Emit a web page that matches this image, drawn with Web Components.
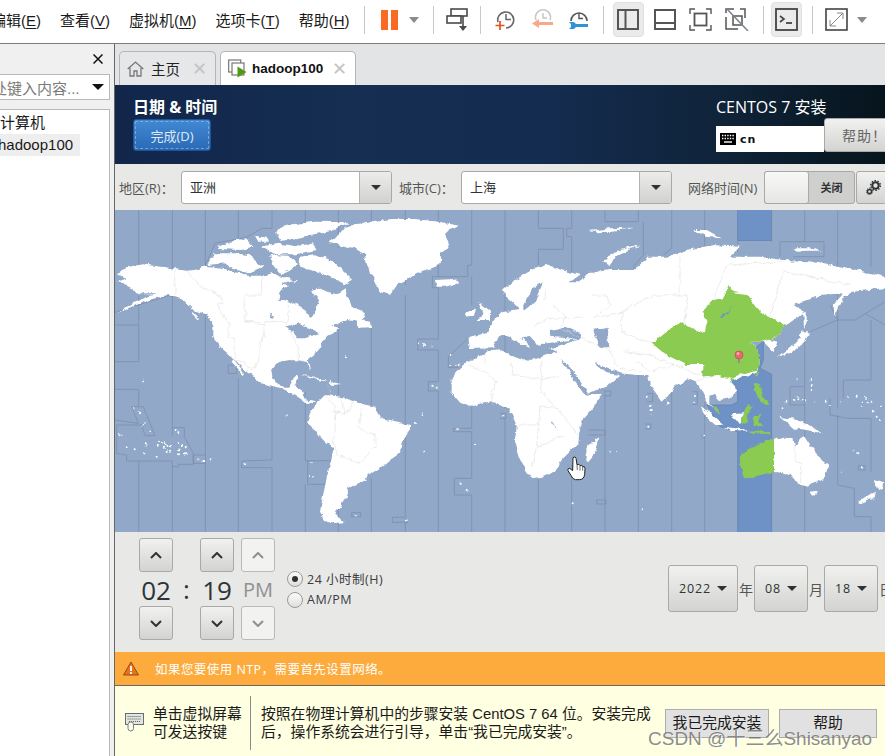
<!DOCTYPE html>
<html>
<head>
<meta charset="utf-8">
<style>
html,body{margin:0;padding:0;width:885px;height:756px;overflow:hidden;background:#fff;}
</style>
</head>
<body>
<vm-app></vm-app>
<script>
const CJK = '"Liberation Sans","Noto Sans CJK SC",sans-serif';
const ANA = '"Open Sans","Noto Sans CJK SC",sans-serif';

// small helper, every element gets its own open shadow root from a template
function def(tag, css, html){
    const template = document.createElement('template');
    template.innerHTML = `<style>*{box-sizing:border-box;}${css}</style>${html}`;
    customElements.define(tag, class extends HTMLElement {
        constructor(){
            super();
            this.attachShadow({mode:'open'}).appendChild(template.content.cloneNode(true));
        }
    });
}

/* ---------- toolbar ---------- */
def('tb-sep', `:host{display:block;width:1px;height:28px;background:#c9c9c9;flex:none;}`, ``);
def('tb-toggle', `:host{display:flex;align-items:center;justify-content:center;height:35px;background:#ebebeb;border:1px solid #e0e0e0;border-radius:4px;flex:none;}`, `<slot></slot>`);

def('vm-menubar', `
:host{display:flex;align-items:center;height:44px;padding-bottom:4px;border-bottom:1px solid #7c7c7c;background:#fff;font:15px ${CJK};color:#1a1a1a;flex:none;overflow:hidden;white-space:nowrap;}
span{flex:none;margin-right:19px;}
u{text-underline-offset:2px;}
svg{flex:none;display:block;}
`, `
<span style="margin-left:-9px">编辑(<u>E</u>)</span>
<span>查看(<u>V</u>)</span>
<span>虚拟机(<u>M</u>)</span>
<span>选项卡(<u>T</u>)</span>
<span style="margin-right:14px">帮助(<u>H</u>)</span>
<tb-sep></tb-sep>
<svg style="margin-left:16px" width="17" height="20" viewBox="0 0 17 20"><rect x="0" width="7" height="20" fill="#fb6a22"/><rect x="10" width="7" height="20" fill="#fb6a22"/></svg>
<svg style="margin-left:11px;margin-right:14px" width="10" height="6" viewBox="0 0 10 6"><path d="M0 0H10L5 6Z" fill="#8a8a8a"/></svg>
<tb-sep></tb-sep>
<svg style="margin-left:12px" width="23" height="24" viewBox="0 0 23 24" fill="none" stroke="#4a4a4a" stroke-width="1.6"><rect x="5" y="1" width="16" height="7"/><rect x="1" y="8" width="14" height="7" fill="#fff"/><path d="M17 8V20"/><path d="M13 18H21L17 23Z" fill="#4a4a4a" stroke="none"/></svg>
<tb-sep style="margin-left:11px"></tb-sep>
<svg style="margin-left:14px" width="21" height="22" viewBox="0 0 21 22" fill="none"><path d="M3 13A8 8 0 1 1 11 19" stroke="#666" stroke-width="1.6"/><path d="M11 5V10.500H16" stroke="#666" stroke-width="1.5"/><path d="M5 12V21M0.500 16.500H9.500" stroke="#e8501a" stroke-width="1.7"/></svg>
<svg style="margin-left:16px" width="21" height="22" viewBox="0 0 21 22" fill="none"><path d="M4 11A7.500 7.500 0 1 1 18 11" stroke="#c9c9c9" stroke-width="1.6"/><path d="M11 4V9H15" stroke="#c4c4c4" stroke-width="1.4"/><path d="M0 14.500L7 10V13H21V16H7V19Z" fill="#f9a98a"/></svg>
<svg style="margin-left:15px" width="21" height="22" viewBox="0 0 21 22" fill="none"><path d="M3 12A8 8 0 1 1 19 12" stroke="#555" stroke-width="1.6"/><path d="M11 4V9.500H15" stroke="#555" stroke-width="1.4"/><path d="M1 13H6L8 15H20V18H8L6 20H1L3 18V15Z" fill="#2f93d6"/></svg>
<tb-sep style="margin-left:14px"></tb-sep>
<tb-toggle style="margin-left:9px;width:31px"><svg width="22" height="21" viewBox="0 0 22 21" fill="none" stroke="#555" stroke-width="2"><rect x="1" y="1" width="20" height="19"/><path d="M8.500 1V20"/></svg></tb-toggle>
<svg style="margin-left:10px" width="22" height="21" viewBox="0 0 22 21" fill="none" stroke="#555" stroke-width="2"><rect x="1" y="1" width="20" height="19"/><path d="M1 14H21"/></svg>
<svg style="margin-left:13px" width="23" height="23" viewBox="0 0 23 23" fill="none" stroke="#555" stroke-width="1.400"><rect x="5.500" y="5.500" width="12" height="12" stroke-width="1.800"/><path d="M1 6V1H6M17 1H22V6M22 17V22H17M6 22H1V17"/></svg>
<svg style="margin-left:13px" width="24" height="23" viewBox="0 0 24 23" fill="none" stroke="#555" stroke-width="1.500"><path d="M1 5V1H9M15 1H20V10M1 9V21H13" /><rect x="8" y="8" width="9" height="9"/><path d="M1 0L23 23" stroke="#7a8290"/></svg>
<tb-sep style="margin-left:14px"></tb-sep>
<tb-toggle style="margin-left:7px;width:31px"><svg width="23" height="23" viewBox="0 0 23 23" fill="none" stroke="#444" stroke-width="1.800"><rect x="1" y="1" width="21" height="21"/><path d="M5 8L9 11L5 14" stroke-width="1.600"/><path d="M11 15H17"/></svg></tb-toggle>
<tb-sep style="margin-left:10px"></tb-sep>
<svg style="margin-left:12px" width="23" height="23" viewBox="0 0 23 23" fill="none" stroke="#444" stroke-width="1.600"><rect x="1" y="1" width="21" height="21"/><path d="M5 18L18 5" stroke="#8a8a8a" stroke-width="1"/><path d="M12 5H18V11M5 12V18H11" stroke="#8a8a8a" stroke-width="1"/></svg>
<svg style="margin-left:9px" width="10" height="6" viewBox="0 0 10 6"><path d="M0 0H10L5 6Z" fill="#8a8a8a"/></svg>
`);

/* ---------- left library panel ---------- */
def('vm-sidebar', `
:host{display:flex;flex-direction:column;width:114px;background:#f0f0f0;flex:none;padding-right:4px;font:15px ${CJK};color:#1a1a1a;overflow:hidden;white-space:nowrap;}
.head{height:30px;display:flex;align-items:center;justify-content:flex-end;padding-right:7px;line-height:1;flex:none;}
.search{height:26px;background:#fff;border:1px solid #b9b9b9;border-left:0;display:flex;align-items:center;color:#7a7a7a;flex:none;}
.search span{margin-left:-8px;flex:none;}
.search svg{margin-left:auto;margin-right:5px;}
.tree{flex:1;margin-top:9px;background:#fff;border:1px solid #b9b9b9;border-left:0;border-bottom:0;padding-top:2px;}
.tree div{height:22px;line-height:22px;}
.sel{width:80px;background:#eeeeee;}
.sel span{margin-left:-2px;display:block;}
`, `
<div class="head"><svg width="10" height="10" viewBox="0 0 10 10"><path d="M0.500 0.500L9.500 9.500M9.500 0.500L0.500 9.500" stroke="#111" stroke-width="1.500"/></svg></div>
<div class="search"><span>处键入内容...</span><svg width="12" height="6" viewBox="0 0 12 6"><path d="M0 0H12L6 6Z" fill="#111"/></svg></div>
<div class="tree"><div>计算机</div><div class="sel"><span>hadoop100</span></div></div>
`);

/* ---------- tabs ---------- */
def('vm-tabs', `
:host{display:flex;align-items:flex-end;height:41px;background:#e3e4e6;padding-left:4px;flex:none;font:14.5px ${CJK};color:#222;white-space:nowrap;}
.tab{height:34px;display:flex;align-items:center;border:1px solid #b5b5b5;border-bottom:0;border-radius:5px 5px 0 0;}
.home{width:97px;padding-left:7px;background:#e6e7e9;}
.vm{width:136px;padding-left:7px;background:#fff;margin-left:4px;font-weight:bold;font-size:13.5px;color:#111;}
.vm svg{margin-right:5px;}
.x{margin-left:auto;margin-right:8px;font:18px "Liberation Sans",sans-serif;color:#c4c4c4;}
svg{flex:none;margin-right:7px;}
`, `
<div class="tab home"><svg width="17" height="16" viewBox="0 0 17 16" fill="none" stroke="#777" stroke-width="1.300"><path d="M0.700 8L8.500 1L16.300 8"/><path d="M3 6.500V15H7V10H10V15H14V6.500"/></svg><span>主页</span><span class="x">✕</span></div>
<div class="tab vm"><svg width="19" height="19" viewBox="0 0 19 19" fill="none"><rect x="0.700" y="1" width="12" height="12" stroke="#777" stroke-width="1.200"/><rect x="4" y="4" width="12" height="12" stroke="#777" stroke-width="1.200" fill="#fff"/><path d="M9.500 7.500L18.500 13L9.500 18.500Z" fill="#4f9a12"/></svg><span>hadoop100</span><span class="x">✕</span></div>
`);

/* ---------- anaconda widgets ---------- */
def('ana-button', `
:host{display:flex;align-items:center;justify-content:center;flex:none;background:linear-gradient(#f1f1f0,#d3d3d1);border:1px solid #a9a9a7;border-radius:3px;color:#2e3436;font:12px ${ANA};}
`, `<slot></slot>`);

def('ana-combo', `
:host{display:flex;width:211px;height:33px;background:#fff;border:1px solid #a9a9a7;border-radius:3px;flex:none;font:13px ${ANA};color:#2e3436;}
.v{flex:1;padding-left:8px;line-height:31px;}
.a{width:32px;background:linear-gradient(#ececea,#d1d1cf);border-left:1px solid #b3b3b1;display:flex;align-items:center;justify-content:center;border-radius:0 2px 2px 0;}
`, `<div class="v"><slot></slot></div><div class="a"><svg width="10" height="5" viewBox="0 0 10 5"><path d="M0 0H10L5 5Z" fill="#2e3436"/></svg></div>`);

def('spoke-header', `
:host{display:flex;height:79px;flex:none;background:linear-gradient(90deg,#11264a 0%,#152e52 30%,#142c50 55%,#0f2338 80%,#06141c 100%);color:#fff;font:15px ${ANA};white-space:nowrap;overflow:hidden;}
.left{width:601px;padding:12px 0 0 18px;flex:none;}
.title{font-weight:bold;line-height:20px;font-size:16px;}
.done{display:flex;align-items:center;justify-content:center;margin-top:2px;width:78px;height:32px;color:#dfe9f6;font-size:13px;background:linear-gradient(#4289d2,#2a69b6);border:1px solid #1f5596;border-radius:3px;outline:1px dashed rgba(170,205,240,.55);outline-offset:-3px;}
.right{width:175px;padding-top:12px;flex:none;}
.inst{line-height:20px;font-size:16px;}
.row{display:flex;align-items:flex-end;margin-top:1px;}
.kb{width:108px;height:26px;background:#fff;display:flex;align-items:center;padding-left:4px;color:#111;font:bold 11px "DejaVu Sans",sans-serif;letter-spacing:1px;}
.kb svg{margin-right:4px;}
ana-button{width:66px;height:34px;font-size:14px;color:#666;letter-spacing:1px;justify-content:flex-start;padding-left:17px;}
`, `
<div class="left"><div class="title">日期 &amp; 时间</div><div class="done">完成(D)</div></div>
<div class="right"><div class="inst">CENTOS 7 安装</div>
<div class="row"><div class="kb"><svg width="16" height="12" viewBox="0 0 16 12"><rect width="16" height="12" fill="#000"/><path d="M2 2.500H14M2 5.500H14" stroke="#fff" stroke-width="1.400" stroke-dasharray="1.400 1.200"/><path d="M4 9H12" stroke="#fff" stroke-width="1.400"/></svg>cn</div><ana-button>帮助！</ana-button></div></div>
`);

def('tz-bar', `
:host{display:flex;align-items:center;height:46px;background:#e8e8e7;padding-left:4px;flex:none;font:13px ${ANA};color:#555753;white-space:nowrap;overflow:hidden;}
.l{width:62px;flex:none;}
.toggle{display:flex;width:91px;height:33px;flex:none;background:#cfcfcd;border:1px solid #a9a9a7;border-radius:3px;font-size:11px;font-weight:bold;color:#2e3436;}
.knob{width:45px;background:linear-gradient(#f8f8f7,#e6e6e4);border-radius:3px;margin:-1px 0 -1px -1px;border:1px solid #a9a9a7;}
.off{flex:1;text-align:center;line-height:31px;}
ana-button{width:34px;height:33px;margin-left:1px;}
`, `
<div class="l">地区(R)：</div><ana-combo>亚洲</ana-combo>
<div class="l" style="margin-left:7px">城市(C)：</div><ana-combo>上海</ana-combo>
<div class="l" style="margin-left:16px;width:76px">网络时间(N)</div>
<div class="toggle"><div class="knob"></div><div class="off">关闭</div></div>
<ana-button><svg width="15" height="15" viewBox="0 0 15 15"><circle cx="9.500" cy="5.500" r="3.200" fill="none" stroke="#2e3436" stroke-width="2"/><circle cx="9.500" cy="5.500" r="4.800" fill="none" stroke="#2e3436" stroke-width="1.500" stroke-dasharray="1.500 1.500"/><circle cx="3.500" cy="11.500" r="2" fill="none" stroke="#2e3436" stroke-width="1.400"/><circle cx="3.500" cy="11.500" r="3.200" fill="none" stroke="#2e3436" stroke-width="1" stroke-dasharray="1 1"/></svg></ana-button>
`);

/* map: drawn in the coordinates of a 3x trace (x 0..2310, y 15..981) */
const asia = 'translate(1155 0)';
const dots = (pts, r) => pts.map(p => `<circle cx="${p[0]}" cy="${p[1]}" r="${r||3}"/>`).join('');
const pacific = [[58,610],[72,622],[88,652],[82,660],[105,680],[14,688],[20,692],[35,727],[56,733],[92,715],[95,720],[88,748],[125,755],[128,725],[132,710],[140,710],[148,712],[155,717],[160,722],[170,725],[150,725],[155,738],[165,740],[190,715],[198,722],[212,730],[190,733],[192,745],[210,745],[215,745],[210,752],[182,675],[190,682],[250,760],[265,765],[290,763],[85,527],[690,457],[912,415],[930,420],[950,425],[1006,453],[1005,480],[1020,482],[1028,477],[952,545],[965,548],[923,627],[903,654],[1025,673],[1080,716],[925,740],[390,778],[588,772],[582,813],[595,813],[1037,833],[1055,855],[725,930],[875,948],[515,634]];
const oceania = [[330,740],[348,738],[218,895],[428,912],[892,520],[932,525],[935,540],[935,555],[895,580],[880,585],[905,585],[915,592],[945,590],[980,590],[990,600],[1020,595],[1045,575],[1070,575],[1085,590],[1095,575],[1100,590],[1085,605],[1115,590],[1145,600],[1120,620],[1130,635],[1140,645],[845,610],[860,590],[1060,740],[1075,745],[1023,803],[1085,787],[610,695],[445,665],[440,575],[450,600],[452,615],[452,630],[585,570],[582,590],[10,630]];

def('tz-map', `
:host{display:block;height:322px;flex:none;overflow:hidden;}
svg{display:block;}
`, `
<svg width="770" height="322" viewBox="0 15 2310 966" preserveAspectRatio="none">
<defs><filter id="rough" x="-2%" y="-2%" width="104%" height="104%" color-interpolation-filters="sRGB"><feTurbulence type="fractalNoise" baseFrequency=".045" numOctaves="3" seed="4"/><feDisplacementMap in="SourceGraphic" scale="16" xChannelSelector="R" yChannelSelector="G"/></filter></defs>
<rect x="0" y="15" width="2310" height="966" fill="#92a8c9"/>
<g transform="${asia}" fill="#6f92c6" stroke="#5f7fae" stroke-width="2">
  <rect x="713" y="14" width="102" height="93"/>
  <path d="M790 410V465L780 490L815 508V672L815 984H713V680L660 665L620 600H695L713 590V550L685 530L690 515L770 495L780 470L770 425Z"/>
</g>
<g fill="none" stroke="#7c8ca8" stroke-width="2.200">
  <path d="M71 15V470H0M0 360H71M0 553H71V605H50L70 655L0 645M71 605H85L120 692H90L80 660H5V745L35 750V768H172V785H190V778H235V745L208 695V668H172V692M71 768V981"/>
  <path d="M172 15V275M172 275V668M172 785V981M0 322L160 272L172 275L270 185L300 115L395 97L440 70H471"/>
  <path d="M271 15V185M271 305V775H235V750H271M271 775V981M340 480H365V505H340Z"/>
  <path d="M370 15V100M370 520V981"/>
  <path d="M471 15V70M471 540V765L380 768V788H471V981"/>
  <path d="M571 15V60M571 560V767H650M578 767V838H630M571 838V981"/>
  <path d="M670 15V130M670 350V570M670 860V981"/>
  <path d="M769 15V150M769 370V600M769 820V981"/>
  <path d="M871 15V240M871 270V937H832V952H880M871 952V981M710 923H737V935H710Z"/>
  <path d="M970 15V215M1070 15V180L1058 182V215H952V248H970V402H908V435H970V530H940V558H970V981"/>
  <path d="M1070 215V300M1000 455L1060 400M1000 455V487H1030M1070 605V670H1015V680H1070V820H1018V870H1070V981"/>
</g>
<g transform="${asia}" fill="none" stroke="#7c8ca8" stroke-width="2.200">
  <path d="M15 15V610M0 625H18V640H0M15 640V981"/>
  <path d="M115 15V70H190V133H115V180M115 820V981"/>
  <path d="M215 15V70H200V95H215V230M215 780V981"/>
  <path d="M315 15V50H415V15M430 50V150L400 185L430 220M315 560V981M310 558H332V572H310M265 675H315V690H265M290 885H318V897H290Z"/>
  <path d="M415 510V981M490 150L515 130V15M515 520V981"/>
  <path d="M614 15V130M614 590V981M440 565H458V590H440M578 560H592V598H578M436 657H452V672H436M604 692H612V698H604"/>
  <path d="M713 107V140M815 15V110"/>
  <path d="M840 155V110H972V155H880M914 15V110M914 380V981M870 545H914M870 545V600H914"/>
  <path d="M1013 15V345L930 380M990 300L1013 345L1065 345L1155 290M1013 345V610M990 580V630L1045 640H1113M1013 630V840L1063 850V935H1113V981"/>
  <path d="M1113 15V185M1113 345V525H1030V580M1113 640V800M1095 325L1155 360M1075 782H1095V795H1075Z"/>
</g>
<g filter="url(#rough)">
<g fill="#fff">
  <path d="M5 205L45 185L80 178L125 183L180 192L215 197L240 195L270 183L300 185L330 190L350 200L380 205L400 212L440 212L470 205L490 215L520 213L530 225L545 225L530 240L505 250L495 265L490 285L510 285L530 292L555 305L575 320L585 335L597 330L605 310L612 285L598 270L590 255L610 248L640 262L665 268L690 253L695 270L705 290L710 305L735 315L745 320L750 335L740 345L765 350L768 367L727 368L725 350L700 345L680 352L650 365L670 372L655 385L640 392L620 415L612 430L595 450L575 465L587 492L570 470L545 465L520 465L495 472L480 480L468 495L472 515L482 532L505 545L520 545L530 525L545 510L550 520L540 540L565 560L572 585L600 592L590 598L570 590L540 570L500 550L440 535L410 510L385 490L355 460L320 430L295 400L295 360L280 330L235 315L205 285L160 270L100 285L40 310L5 325L60 290L100 270L130 265L60 265L50 250L20 235L5 230L40 220Z"/>
  <path d="M690 65L760 50L830 42L900 42L970 50L1035 62L1005 75L990 90L1000 110L1000 130L975 145L980 165L965 185L930 195L900 205L875 225L850 235L825 270L800 262L790 250L770 205L755 175L750 150L720 130L700 125L640 110L670 90Z"/>
  <path d="M960 225L1020 222L1030 235L990 245L965 245Z"/>
  <path d="M275 180L300 145L360 145L400 150L425 170L445 185L420 195L400 205L350 190L330 175Z"/>
  <path d="M305 125L340 112L390 100L415 125L380 135L310 132Z"/>
  <path d="M420 92L455 98L462 110L430 110Z"/>
  <path d="M480 80L510 60L600 50L705 52L650 75L560 97L500 108L490 90Z"/>
  <path d="M440 125L480 115L560 125L590 115L605 135L540 148L480 148Z"/>
  <path d="M555 155L600 148L650 168L675 190L712 225L690 238L640 212L600 198L552 188Z"/>
  <path d="M465 150L520 152L548 175L530 192L495 208L475 180Z"/>
  <path d="M755 175L780 180L785 200L765 205Z"/>
  <path d="M560 510L600 515L640 530L610 525Z"/>
  <path d="M640 530L680 537L650 540Z"/>
  <path d="M355 462L390 505L385 510L350 470Z"/>
  <path d="M232 318L258 345L250 345L230 325Z"/>
  <path d="M590 620L605 595L630 570L680 575L720 590L755 600L780 605L800 640L850 650L885 660L885 680L860 710L855 745L825 765L800 785L770 805L750 825L700 850L690 880L660 925L690 952L650 955L625 940L615 920L630 840L650 760L655 730L630 710L610 690L580 650Z"/>
  <path d="M1090 290L1125 320L1125 345L1090 345L1105 320Z"/>
  <path d="M1055 320L1080 310L1075 332L1052 335Z"/>
  ${dots(pacific)}
</g>
<g fill="#92a8c9">
  <path d="M510 365L555 355L615 385L570 400L545 400L535 380Z"/>
  <path d="M460 320L478 340L470 342Z"/>
  <path d="M650 365L700 345L710 360L670 365Z"/>
  <path d="M500 235L540 225L530 245Z"/>
</g>
<g transform="${asia}" fill="#fff">
  <path d="M-145 520L-120 490L-95 470L-45 445L0 430L30 450L60 462L100 465L140 450L180 440L190 470L205 495L230 540L255 565L305 570L285 600L250 640L238 680L235 715L190 760L165 800L130 815L95 820L75 790L60 760L45 710L50 660L25 610L-30 590L-85 605L-125 590L-145 565Z"/>
  <path d="M-95 395L-40 385L-25 355L0 325L20 318L60 312L40 290L5 260L45 225L95 195L140 180L185 195L240 210L205 235L235 235L260 205L330 195L400 195L430 170L440 155L500 155L560 135L640 120L720 125L690 155L780 155L850 165L950 170L1050 190L1155 215V250L1060 260L1030 280L1005 335L1000 300L1030 265L960 270L880 300L915 320L860 360L830 395L810 405L830 410L820 440L805 425L790 410L750 410L770 425L780 470L770 500L690 530L712 555L690 580L660 585L645 570L628 575L628 600L650 625L625 600L610 570L590 530L565 520L530 540L485 590L465 560L450 540L445 510L410 510L360 505L300 480L280 470L320 505L360 510L320 545L260 565L205 480L170 440L150 430L240 403L150 410L110 420L95 395L60 400L45 375L92 430L70 420L30 395L0 390L-10 405L-20 430L-90 432Z"/>
  <path d="M255 765L265 720L298 700L285 745L265 768Z"/>
  <path d="M310 170L340 140L420 120L350 150L330 180Z"/>
  <path d="M270 78L330 70L400 68L340 80L285 82Z"/>
  <path d="M580 75L620 75L665 100L620 95Z"/>
  <path d="M880 130L930 130L970 140L890 140Z"/>
  <path d="M910 325L920 320L920 355L912 372Z"/>
  <path d="M830 460L880 420L905 400L900 380L930 378L910 410L880 440Z"/>
  <path d="M497 582L510 595L500 600Z"/>
  <path d="M600 605L630 625L670 660L650 660L620 635Z"/>
  <path d="M670 665L725 672L740 680L700 678Z"/>
  <path d="M695 628L730 625L725 650L700 645Z"/>
  <path d="M840 635L890 645L930 660L965 685L920 675L880 670L860 650Z"/>
  <path d="M822 705L850 695L880 700L885 725L910 690L945 745L985 780L975 815L920 845L895 835L870 810L822 800Z"/>
  <path d="M930 860L950 858L945 875L935 873Z"/>
  <path d="M1075 890L1115 865L1125 860L1120 880L1085 895Z"/>
  <path d="M1125 825L1150 835L1145 855L1130 850Z"/>
  ${dots(oceania)}
</g>
<g transform="${asia}" fill="#92a8c9">
  <path d="M70 300L100 250L130 228L120 250L105 290L70 318Z"/>
  <path d="M150 375L195 365L240 385L240 403L150 395Z"/>
  <path d="M280 375L320 365L325 430L300 430L290 400Z"/>
  <path d="M190 470L250 565L270 570L200 475Z"/>
  <path d="M285 470L320 505L330 500L300 478Z"/>
  <path d="M155 650L170 675L160 650Z"/>
</g>
<g fill="none" stroke="#d6d6d6" stroke-width="1.500">
  <path d="M180 192V270M215 197L250 240L320 275V295L305 300L345 360L335 395L360 400V465M440 215V270H390V350L450 360L430 470L420 490M520 300V345L515 360L550 425V465"/>
  <path d="M390 350H515M355 460L380 470L410 495L430 470M520 465L580 470M640 540L650 570M630 570L660 605L655 720L670 750L735 775L780 720V690L730 670L740 610M680 575L690 625L650 620M715 590L695 625"/>
  <path d="M1062 480L1110 500L1145 530L1130 560L1135 600M1110 445V480"/>
</g>
<g transform="${asia}" fill="none" stroke="#d6d6d6" stroke-width="1.500">
  <path d="M30 470L40 510L100 520L180 515M125 465L125 560L165 605L120 605L110 725L100 760L97 790M165 605L205 650L235 690M50 660L120 660M110 725L195 690"/>
  <path d="M130 285L140 250M160 300L200 340L180 370L250 400L330 440L360 490L420 500M100 360L160 340L250 340M275 270L320 270L330 300L280 340L370 320L365 380L440 410L455 415M365 320L460 270L560 270L555 360L610 385M540 150L540 270M640 285L680 180L850 170M810 340L850 200L1050 240M410 470L450 500L520 480L600 510M520 480L450 450L370 440"/>
  <path d="M885 725V770L905 775V835M590 530L640 510"/>
</g>
<g transform="${asia}">
  <path d="M685 240L700 265L740 270L770 310L810 340L860 360L830 395L790 410L750 410L770 425L780 470L770 495L730 505L690 520L640 510L610 515L610 480L560 480L500 450L455 415L510 370L545 352L575 370L615 385L620 350L605 318L640 285L665 280Z" fill="#8bcb51"/>
  <path d="M660 335L680 322L695 305L685 325L665 338Z" fill="#6f92c6"/>
  <g fill="#8bcb51">
    <path d="M725 745L800 705L822 705V800L780 810L735 822L720 770Z"/>
    <path d="M770 500L778 497L772 515L766 512Z"/>
    <path d="M690 518L705 522L695 532Z"/>
    <path d="M765 535L780 535L785 570L805 590L800 600L780 585L765 560Z"/>
    <path d="M635 600L655 615L660 625L645 620Z"/>
    <path d="M725 650L730 625L745 598L758 605L745 630L735 655Z"/>
    <path d="M758 640L785 625L775 645L790 660L765 660Z"/>
    <path d="M740 680L810 678L810 686L760 686Z"/>
  </g>
</g>
</g>
<g transform="${asia}">
  <rect x="714" y="458" width="5" height="16" fill="#8a8a8a"/>
  <circle cx="717" cy="450" r="12" fill="#e96a6e" stroke="#c04a4e" stroke-width="2"/>
  <circle cx="714" cy="446" r="4" fill="#f8b8ba"/>
  <path d="M219 758Q226 752 228 760L231 779Q238 775 240 782Q247 778 248 785Q255 783 255 790L254 808Q252 824 238 824H226Q218 823 214 813L204 797Q201 790 209 790L218 797Z" fill="#fff" stroke="#222" stroke-width="3"/>
  <path d="M231 779L232 795M240 782L240 797M248 785L248 797" stroke="#222" stroke-width="2" fill="none"/>
</g>
</svg>
`);

def('time-spin', `
:host{display:flex;flex-direction:column;width:34px;flex:none;}
ana-button{height:34px;width:34px;}
.v{height:34px;text-align:center;font:26px/36px "Open Sans",sans-serif;color:#2e3436;white-space:nowrap;display:flex;justify-content:center;}
:host([off]) ana-button{background:#f2f2f1;border-color:#b9b9b7;}
:host([off]) .v{color:#8e9192;font-size:20px;}
:host([off]) path{stroke:#8e9192;}
path{fill:none;stroke:#2e3436;stroke-width:2;}
`, `
<ana-button><svg width="12" height="7" viewBox="0 0 12 7"><path d="M1 6L6 1L11 6"/></svg></ana-button>
<div class="v"><slot></slot></div>
<ana-button><svg width="12" height="7" viewBox="0 0 12 7"><path d="M1 1L6 6L11 1"/></svg></ana-button>
`);

def('ana-radio', `
:host{display:flex;align-items:center;height:21px;font:12.5px ${ANA};letter-spacing:.5px;color:#3a3d3e;white-space:nowrap;}
i{display:flex;align-items:center;justify-content:center;width:16px;height:16px;border-radius:50%;border:1px solid #9a9a98;background:linear-gradient(#fbfbfa,#dfdfdd);margin-right:4px;flex:none;}
:host([on]) i::after{content:"";width:6px;height:6px;border-radius:50%;background:#2e3436;}
`, `<i></i><slot></slot>`);

def('time-panel', `
:host{display:flex;height:120px;flex:none;background:#e8e8e7;padding:6px 0 0 24px;overflow:hidden;font:12px ${ANA};color:#555753;white-space:nowrap;}
.colon{width:27px;flex:none;text-align:center;font:26px/36px "Open Sans",sans-serif;color:#2e3436;margin-top:33px;}
.radios{margin:30px 0 0 12px;width:381px;flex:none;}
.date{display:flex;align-items:center;margin-top:27px;height:47px;flex:none;}
.date ana-button{height:47px;width:54px;letter-spacing:.8px;font-size:12.5px;}
.date svg{margin-left:6px;}
.date span{width:16px;text-align:center;flex:none;font-size:14px;}
`, `
<time-spin>02</time-spin><div class="colon">:</div><time-spin>19</time-spin>
<time-spin off style="margin-left:7px">PM</time-spin>
<div class="radios"><ana-radio on>24 小时制(H)</ana-radio><ana-radio>AM/PM</ana-radio></div>
<div class="date">
<ana-button style="width:70px">2022<svg width="10" height="5" viewBox="0 0 10 5"><path d="M0 0H10L5 5Z" fill="#2e3436"/></svg></ana-button><span>年</span>
<ana-button>08<svg width="10" height="5" viewBox="0 0 10 5"><path d="M0 0H10L5 5Z" fill="#2e3436"/></svg></ana-button><span>月</span>
<ana-button>18<svg width="10" height="5" viewBox="0 0 10 5"><path d="M0 0H10L5 5Z" fill="#2e3436"/></svg></ana-button><span>日</span>
</div>
`);

def('warn-bar', `
:host{display:flex;align-items:center;height:33px;background:#fcab3c;flex:none;padding-left:8px;color:#fff;font:12.5px ${ANA};letter-spacing:.45px;white-space:nowrap;}
svg{margin-right:16px;flex:none;}
`, `<svg width="16" height="15" viewBox="0 0 16 15"><path d="M8 1L15.500 14H0.500Z" fill="#e8711c" stroke="#9c4a12" stroke-width="1"/><path d="M8 5V10M8 11V13" stroke="#fff" stroke-width="1.800"/></svg>如果您要使用 NTP，需要首先设置网络。`);

def('install-screen', `
:host{display:flex;flex-direction:column;flex:none;}
`, `<spoke-header></spoke-header><tz-bar></tz-bar><tz-map></tz-map><time-panel></time-panel><warn-bar></warn-bar>`);

def('hint-bar', `
:host{display:flex;flex:1;background:#ffffe1;border-top:1px solid #686868;font:14.8px/18px ${CJK};color:#1a1a1a;position:relative;white-space:nowrap;overflow:hidden;}
.ic{width:38px;flex:none;padding:27px 0 0 10px;}
.a{width:97px;flex:none;padding-top:19px;}
.sep{width:1px;height:54px;background:#8a8a8a;margin-top:10px;flex:none;}
.b{width:414px;padding:19px 0 0 10px;flex:none;}
.btn{flex:none;height:29px;background:#e1e1e1;border:1px solid #adadad;text-align:center;line-height:27px;margin-top:23px;}
.mark{position:absolute;left:533px;top:37px;font:19px "Liberation Sans","Noto Sans CJK SC",sans-serif;color:rgba(110,110,110,.8);text-shadow:1px 1px 0 rgba(255,255,255,.7);}
`, `
<div class="ic"><svg width="19" height="19" viewBox="0 0 19 19" fill="none"><rect x="0.500" y="0.500" width="18" height="11" fill="#e6e6d8" stroke="#5f6f7f"/><path d="M2.500 3.500H16.500M2.500 6H16.500M4 8.500H15" stroke="#5f6f7f" stroke-dasharray="1.200 .8"/><rect x="3" y="9" width="5.500" height="9" rx="2.700" fill="#ffffe1" stroke="#6f7f8f"/></svg></div>
<div class="a">单击虚拟屏幕<br>可发送按键</div>
<div class="sep"></div>
<div class="b">按照在物理计算机中的步骤安装 CentOS 7 64 位。安装完成<br>后，操作系统会进行引导，单击“我已完成安装”。</div>
<div class="btn" style="width:104px">我已完成安装</div>
<div class="btn" style="width:98px;margin-left:10px">帮助</div>
<div class="mark">CSDN @十三么Shisanyao</div>
`);

def('vm-workspace', `
:host{display:flex;flex-direction:column;flex:1;min-width:0;border-left:1px solid #666;overflow:hidden;}
`, `<vm-tabs></vm-tabs><install-screen></install-screen><hint-bar></hint-bar>`);

def('vm-app', `
:host{display:flex;flex-direction:column;width:885px;height:756px;overflow:hidden;}
.main{display:flex;flex:1;min-height:0;}
`, `<vm-menubar></vm-menubar><div class="main"><vm-sidebar></vm-sidebar><vm-workspace></vm-workspace></div>`);
</script>
</body>
</html>
